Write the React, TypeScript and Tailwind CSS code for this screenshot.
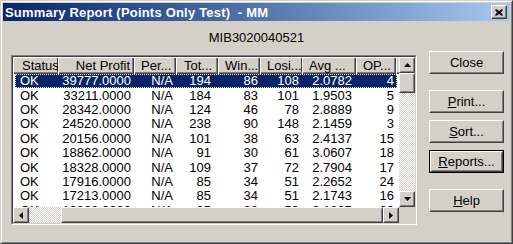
import React from "react";

const ROWS: string[][] = [
  ["39777.0000", "194", "86", "108", "2.0782", "4"],
  ["33211.0000", "184", "83", "101", "1.9503", "5"],
  ["28342.0000", "124", "46", "78", "2.8889", "9"],
  ["24520.0000", "238", "90", "148", "2.1459", "3"],
  ["20156.0000", "101", "38", "63", "2.4137", "15"],
  ["18862.0000", "91", "30", "61", "3.0607", "18"],
  ["18328.0000", "109", "37", "72", "2.7904", "17"],
  ["17916.0000", "85", "34", "51", "2.2652", "24"],
  ["17213.0000", "85", "34", "51", "2.1743", "16"],
  ["13828.0000", "95", "26", "59", "2.1895", "22"],
];

// header label, column width, header text class, cell class
const COLS = [
  { lbl: "Status", w: "w-[45px]", hd: "justify-start pl-[8px]", cell: "justify-start pl-[6px]" },
  { lbl: "Net Profit", w: "w-[76px]", hd: "justify-end pr-[2px]", cell: "justify-end pr-[4px]" },
  { lbl: "Per...", w: "w-[42px]", hd: "justify-start pl-[6px]", cell: "justify-end pr-[4px]" },
  { lbl: "Tot...", w: "w-[42px]", hd: "justify-start pl-[7px]", cell: "justify-end pr-[8px]" },
  { lbl: "Win...", w: "w-[42px]", hd: "justify-start pl-[6px]", cell: "justify-end pr-[3px]" },
  { lbl: "Losi...", w: "w-[42px]", hd: "justify-start pl-[6px]", cell: "justify-end pr-[4px]" },
  { lbl: "Avg ...", w: "w-[54px]", hd: "justify-start pl-[6px]", cell: "justify-end pr-[5px]" },
  { lbl: "OP...", w: "w-[40px]", hd: "justify-start pl-[6px]", cell: "justify-end pr-[3px]" },
];

const RAISED =
  "border border-t-white border-l-white border-r-[#404040] border-b-[#404040]";
const RAISED_IN = "border border-t-[#d4d0c8] border-l-[#d4d0c8] border-r-[#808080] border-b-[#808080]";
const CHECKER =
  "bg-[repeating-conic-gradient(#d4d0c8_0_25%,#ffffff_0_50%)] bg-[length:2px_2px]";

function Arrow({ dir }: { dir: "up" | "down" | "left" | "right" }) {
  const pts = {
    up: "3.5,0 7,4 0,4",
    down: "0,0 7,0 3.5,4",
    left: "4,0 4,7 0,3.5",
    right: "0,0 4,3.5 0,7",
  }[dir];
  const vertical = dir === "up" || dir === "down";
  return (
    <svg width={vertical ? 7 : 4} height={vertical ? 4 : 7} viewBox={vertical ? "0 0 7 4" : "0 0 4 7"}>
      <polygon points={pts} fill="#000" />
    </svg>
  );
}

function ScrollBtn({ dir }: { dir: "up" | "down" | "left" | "right" }) {
  return (
    <div className={`h-[16px] w-[16px] shrink-0 bg-[#d4d0c8] ${RAISED}`}>
      <div className={`flex h-full w-full items-center justify-center ${RAISED_IN}`}>
        <Arrow dir={dir} />
      </div>
    </div>
  );
}

function Thumb({ className }: { className: string }) {
  return (
    <div className={`shrink-0 bg-[#d4d0c8] ${RAISED} ${className}`}>
      <div className={`h-full w-full ${RAISED_IN}`} />
    </div>
  );
}

function PushButton({
  children,
  isDefault,
  className = "",
}: {
  children: React.ReactNode;
  isDefault?: boolean;
  className?: string;
}) {
  const face = (
    <div className={`h-full w-full ${RAISED}`}>
      <div className={`flex h-full w-full items-center justify-center ${RAISED_IN}`}>
        {children}
      </div>
    </div>
  );
  return (
    <div className={`h-[23px] w-[75px] bg-[#d4d0c8] ${className}`}>
      {isDefault ? <div className="h-full w-full border border-black">{face}</div> : face}
    </div>
  );
}

export default function App() {
  return (
    <div className="h-[244px] w-[513px] bg-[#d4d0c8] font-['Liberation_Sans_Narrow','Arial_Narrow','Liberation_Sans',sans-serif] text-[13px] text-black">
      <div className="h-full border border-t-[#d4d0c8] border-l-[#d4d0c8] border-r-[#404040] border-b-[#404040]">
        <div className="flex h-full flex-col border border-t-white border-l-white border-r-[#808080] border-b-[#808080] p-px">
          {/* title bar */}
          <div className="flex h-[18px] shrink-0 items-center justify-between bg-linear-to-r from-[#0a246a] to-[#a6caf0] pl-[2px] pr-[3px]">
            <span className="text-[13px] font-bold leading-none tracking-[0.2px] text-white">
              Summary Report (Points Only Test)&nbsp; - MM
            </span>
            <div className={`h-[14px] w-[16px] bg-[#d4d0c8] ${RAISED}`}>
              <div className={`flex h-full w-full items-center justify-center ${RAISED_IN}`}>
                <svg width="8" height="7" viewBox="0 0 8 7">
                  <path d="M0.5 0.5 L7.5 6.5 M1.5 0.5 L7.5 5.5 M0.5 1.5 L6.5 6.5 M7.5 0.5 L0.5 6.5 M6.5 0.5 L0.5 5.5 M7.5 1.5 L1.5 6.5" stroke="#000" strokeWidth="1" />
                </svg>
              </div>
            </div>
          </div>

          <div className="mt-[9px] text-center leading-[15px]">MIB3020040521</div>

          <div className="mt-[6px] flex pl-[8px]">
            {/* list view */}
            <div className="mt-[4px] h-[170px] w-[406px] border border-t-[#808080] border-l-[#808080] border-r-white border-b-white">
              <div className="flex h-full w-full border border-t-[#404040] border-l-[#404040] border-r-[#d4d0c8] border-b-[#d4d0c8]">
                <div className="flex w-[386px] flex-col">
                  <div className="h-[150px] overflow-hidden bg-white">
                    <div className="flex h-[17px]">
                      {COLS.map((c) => (
                        <div key={c.lbl} className={`${c.w} shrink-0 bg-[#d4d0c8] border-l border-t border-l-white border-t-white`}>
                          <div className={`flex h-full items-center border-r border-b border-r-[#404040] border-b-[#404040]`}>
                            <div className={`flex h-full flex-1 items-center border-r border-b border-r-[#808080] border-b-[#808080] leading-[15px] ${c.hd}`}>
                              {c.lbl}
                            </div>
                          </div>
                        </div>
                      ))}
                      <div className="flex-1 bg-[#d4d0c8] border-l border-t border-l-white border-t-white">
                        <div className="h-full border-b border-b-[#404040]">
                          <div className="h-full border-b border-b-[#808080]" />
                        </div>
                      </div>
                    </div>
                    {ROWS.map((r, i) => {
                      const sel = i === 0;
                      const cells = ["OK", r[0], "N/A", ...r.slice(1)];
                      return (
                        <div
                          key={i}
                          className={`ml-[2px] flex h-[14.4px] w-[382px] ${sel ? "border border-dotted border-[#f4f0c0] bg-[#0a246a] text-white" : "border border-transparent"}`}
                        >
                          {COLS.map((c, j) => (
                            <div key={j} className={`${c.w} flex shrink-0 items-center leading-[14px] ${c.cell} ${j === 0 ? "-ml-[2px]" : ""}`}>
                              {cells[j]}
                            </div>
                          ))}
                        </div>
                      );
                    })}
                  </div>
                  {/* horizontal scrollbar */}
                  <div className="flex h-[16px]">
                    <ScrollBtn dir="left" />
                    <div className={`w-[32px] ${CHECKER}`} />
                    <Thumb className="h-[16px] flex-1" />
                    <ScrollBtn dir="right" />
                  </div>
                </div>
                {/* vertical scrollbar */}
                <div className="flex w-[16px] flex-col">
                  <ScrollBtn dir="up" />
                  <Thumb className="h-[20px] w-[16px]" />
                  <div className={`flex-1 ${CHECKER}`} />
                  <ScrollBtn dir="down" />
                  <div className="h-[16px] bg-[#d4d0c8]" />
                </div>
              </div>
            </div>

            {/* buttons */}
            <div className="ml-[12px] flex flex-col">
              <PushButton>Close</PushButton>
              <PushButton className="mt-[16px]">
                <span><span className="underline">P</span>rint...</span>
              </PushButton>
              <PushButton className="mt-[7px]">
                <span><span className="underline">S</span>ort...</span>
              </PushButton>
              <PushButton className="mt-[7px]" isDefault>
                <span><span className="underline">R</span>eports...</span>
              </PushButton>
              <PushButton className="mt-[16px]">
                <span><span className="underline">H</span>elp</span>
              </PushButton>
            </div>
          </div>
        </div>
      </div>
    </div>
  );
}
